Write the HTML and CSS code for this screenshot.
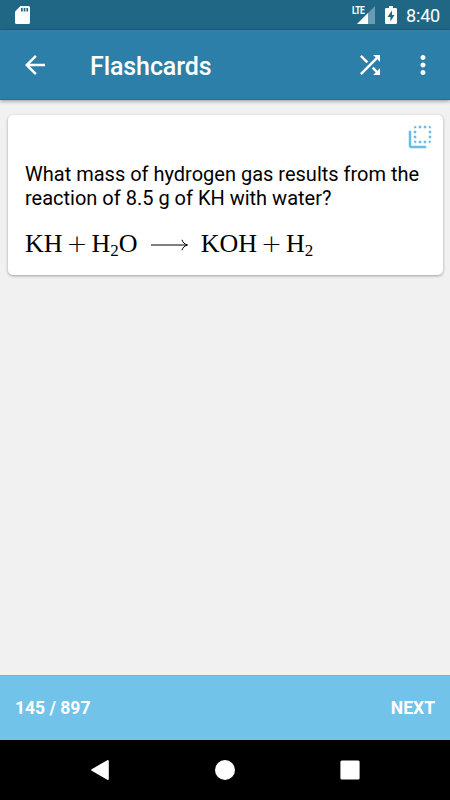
FILE: index.html
```html
<!DOCTYPE html>
<html lang="en">
<head>
    <meta charset="UTF-8">
    <meta name="viewport" content="width=device-width, initial-scale=1.0">
    <title>Flashcards</title>
    <link rel="stylesheet" href="styles.css">
</head>
<body>
    <div class="screen">
        <div class="status-bar">
            <svg class="sd-icon" width="15" height="18" viewBox="0 0 15 18">
                <path fill="#fff" d="M5.500 0H13.500a1.500 1.500 0 0 1 1.500 1.500V16.500a1.500 1.500 0 0 1-1.500 1.500H1.500A1.500 1.500 0 0 1 0 16.500V5.500z"/>
                <path fill="#206786" d="M6 2h1.700v3.500H6zM8.700 2h1.700v3.500H8.700zM11.400 2h1.700v3.500h-1.700z"/>
            </svg>
            <div class="status-right">
                <div class="signal">
                    <span class="lte">LTE</span>
                    <svg width="18" height="18" viewBox="0 0 18 18">
                        <path fill="#6b9bb1" d="M18 0v18H0z"/>
                        <path fill="#fff" d="M11 7v11H0z"/>
                    </svg>
                </div>
                <svg class="battery" width="12" height="18" viewBox="0 0 12 18">
                    <path fill="#fff" d="M4 0h4v2h2.800Q12 2 12 3.200v13.600q0 1.200-1.200 1.200H1.200Q0 18 0 16.800V3.200Q0 2 1.200 2H4z"/>
                    <path fill="#206786" d="M7 4.500L2.500 11H5.400V15.500L9.500 9H7z"/>
                </svg>
                <span class="clock">8:40</span>
            </div>
        </div>

        <header class="app-bar">
            <svg class="icon" viewBox="0 0 24 24"><path d="M20 11H7.830l5.590-5.590L12 4l-8 8 8 8 1.410-1.410L7.830 13H20v-2z"/></svg>
            <h1>Flashcards</h1>
            <svg class="icon" viewBox="0 0 24 24"><path d="M10.590 9.170L5.410 4 4 5.410l5.170 5.170 1.420-1.410zM14.500 4l2.040 2.040L4 18.590 5.410 20 17.960 7.460 20 9.500V4h-5.500zm.33 9.410l-1.410 1.410 3.130 3.130L14.500 20H20v-5.500l-2.040 2.040-3.130-3.130z"/></svg>
            <svg class="icon more" viewBox="0 0 24 24"><path d="M12 8c1.100 0 2-.9 2-2s-.9-2-2-2-2 .9-2 2 .9 2 2 2zm0 2c-1.100 0-2 .9-2 2s.9 2 2 2 2-.9 2-2-.9-2-2-2zm0 6c-1.100 0-2 .9-2 2s.9 2 2 2 2-.9 2-2-.9-2-2-2z"/></svg>
        </header>

        <main>
            <div class="card">
                <svg class="icon flip" viewBox="0 0 24 24"><path d="M9 7H7v2h2V7zm0 4H7v2h2v-2zm0-8c-1.110 0-2 .9-2 2h2V3zm4 12h-2v2h2v-2zm6-12v2h2c0-1.100-.9-2-2-2zm-6 0h-2v2h2V3zM9 17v-2H7c0 1.100.89 2 2 2zm10-4h2v-2h-2v2zm0-4h2V7h-2v2zm0 8c1.100 0 2-.9 2-2h-2v2zM5 7H3v12c0 1.100.89 2 2 2h12v-2H5V7zm10-2h2V3h-2v2zm0 12h2v-2h-2v2z"/></svg>
                <p class="question">What mass of hydrogen gas results from the<br>reaction of 8.5 g of KH with water?</p>
                <div class="formula">
                    <span>KH</span>
                    <span class="plus">+</span>
                    <span>H<sub>2</sub>O</span>
                    <svg class="arrow" width="37" height="12" viewBox="0 0 37 12">
                        <path d="M0 6H36M31 .8C31.800 3.500 33.500 5.200 36.500 6C33.500 6.800 31.800 8.500 31 11.200"/>
                    </svg>
                    <span>KOH</span>
                    <span class="plus">+</span>
                    <span>H<sub>2</sub></span>
                </div>
            </div>
        </main>

        <footer class="bottom-bar">
            <span>145 / 897</span>
            <span class="next">NEXT</span>
        </footer>

        <nav class="nav-bar">
            <svg width="20" height="22" viewBox="0 0 20 22"><path d="M17.800 2v18L2.200 11z"/></svg>
            <svg width="20" height="20" viewBox="0 0 20 20"><circle cx="10" cy="10" r="10"/></svg>
            <svg width="20" height="20" viewBox="0 0 20 20"><rect x=".4" y=".4" width="19.200" height="19.200" rx="1.500"/></svg>
        </nav>
    </div>
</body>
</html>
```
FILE: styles.css
```css
* {
    margin: 0;
    padding: 0;
    box-sizing: border-box;
}

body {
    font-family: Roboto, sans-serif;
    background: #f1f1f1;
    color: #000;
}

svg {
    display: block;
    flex-shrink: 0;
}

.screen {
    display: flex;
    flex-direction: column;
    height: 800px;
    width: 450px;
}

.status-bar {
    height: 30px;
    background: #206786;
    color: #fff;
    display: flex;
    justify-content: space-between;
    padding: 6px 10px 0 15px;
}

.status-right {
    display: flex;
}

.signal {
    position: relative;
    margin-right: 10px;
}

.lte {
    position: absolute;
    left: -4.5px;
    top: 0;
    font-size: 10px;
    line-height: 9px;
    font-weight: 700;
    letter-spacing: -0.6px;
    transform: scaleX(0.85);
    transform-origin: left;
}

.battery {
    margin-right: 9.5px;
}

.clock {
    font-size: 18px;
    line-height: 20px;
    letter-spacing: -0.2px;
}

.app-bar {
    position: relative;
    height: 70px;
    background: #2c7fa8;
    border-bottom: 1px solid #1474a0;
    box-shadow: 0 1px 4px rgba(0, 0, 0, 0.4);
    color: #fff;
    display: flex;
    align-items: center;
    padding: 1px 12.5px 0 20px;
}

.app-bar h1 {
    flex: 1;
    margin-left: 40px;
    font-size: 25px;
    font-weight: 500;
    line-height: 32px;
    letter-spacing: -0.1px;
    padding-top: 3px;
}

.icon {
    width: 30px;
    height: 30px;
    fill: currentColor;
}

.more {
    margin-left: 22.5px;
}

main {
    flex: 1;
    padding: 15px 7.5px;
}

.card {
    height: 160px;
    background: #fff;
    border-radius: 5px;
    box-shadow: 0 1px 3px rgba(0, 0, 0, 0.35);
    padding: 7px 7.5px 0 17.5px;
}

.flip {
    margin-left: auto;
    margin-right: 0.5px;
    color: #65bfe8;
}

.question {
    margin-top: 10px;
    font-size: 20px;
    line-height: 24px;
    white-space: nowrap;
}

.formula {
    display: flex;
    align-items: center;
    margin-top: 19px;
    height: 30px;
    font-family: "Liberation Serif", serif;
    font-size: 26px;
    line-height: 30px;
}

.formula sub {
    font-size: 17px;
    line-height: 0;
    vertical-align: -4px;
}

.plus {
    width: 29px;
    text-align: center;
    font-family: "DejaVu Sans", sans-serif;
    font-weight: 200;
    font-size: 25px;
}

.arrow {
    margin: 1px 13px 0;
    fill: none;
    stroke: #000;
    stroke-width: 1;
}

.bottom-bar {
    height: 65px;
    background: #71c3e9;
    border-top: 1px solid #65bbe3;
    color: #fff;
    display: flex;
    justify-content: space-between;
    align-items: center;
    padding: 0 15px;
    font-size: 17.5px;
    font-weight: 700;
}

.nav-bar {
    height: 60px;
    background: #000;
    display: flex;
    justify-content: center;
    align-items: center;
    gap: 105px;
    fill: #fff;
}

.nav-bar path {
    stroke: #fff;
    stroke-width: 2;
    stroke-linejoin: round;
}
```
